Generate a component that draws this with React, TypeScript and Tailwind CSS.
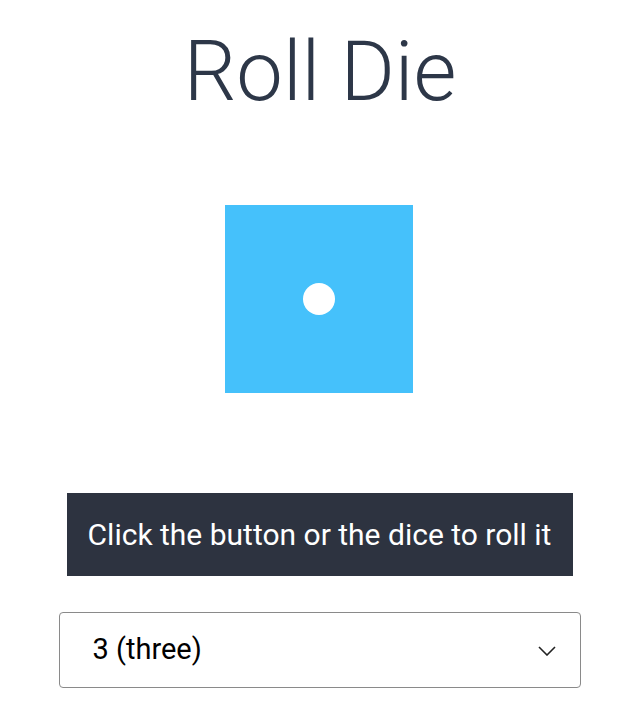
import { useState } from "react";

const NAMES = ["one", "two", "three", "four", "five", "six"];

// pip positions on a 3x3 grid for each face
const PIPS: Record<number, [number, number][]> = {
  1: [[1, 1]],
  2: [[0, 0], [2, 2]],
  3: [[0, 0], [1, 1], [2, 2]],
  4: [[0, 0], [0, 2], [2, 0], [2, 2]],
  5: [[0, 0], [0, 2], [1, 1], [2, 0], [2, 2]],
  6: [[0, 0], [0, 2], [1, 0], [1, 2], [2, 0], [2, 2]],
};

export default function App() {
  const [face, setFace] = useState(1);
  const [choice, setChoice] = useState(3);

  const roll = () => setFace(Math.floor(Math.random() * 6) + 1);

  return (
    <div className="flex flex-col items-center bg-white font-['Roboto',sans-serif] min-h-screen">
      <h1 className="mt-[22px] text-[83px] font-light leading-[100px] text-[#2d3748]">
        Roll Die
      </h1>

      <button
        onClick={roll}
        className="mt-[83px] mr-[2px] grid size-[188px] grid-cols-3 grid-rows-3 bg-[#45c1fb] p-[46px] cursor-pointer"
        aria-label="dice"
      >
        {Array.from({ length: 9 }).map((_, i) => {
          const r = Math.floor(i / 3);
          const c = i % 3;
          const on = PIPS[face].some(([pr, pc]) => pr === r && pc === c);
          return (
            <span key={i} className="flex items-center justify-center">
              {on && <span className="size-[32px] rounded-full bg-white" />}
            </span>
          );
        })}
      </button>

      <button
        onClick={roll}
        className="mt-[100px] mr-[1px] h-[83px] w-[506px] bg-[#2d3340] text-[30px] text-white"
      >
        Click the button or the dice to roll it
      </button>

      <div className="relative mt-[36px] mr-[1px] w-[522px]">
        <select
          value={choice}
          onChange={(e) => setChoice(Number(e.target.value))}
          className="h-[76px] w-full appearance-none rounded-[4px] border border-[#8a8a8a] bg-white pl-[33px] text-[29px] text-black outline-none"
        >
          {NAMES.map((n, i) => (
            <option key={n} value={i + 1}>
              {i + 1} ({n})
            </option>
          ))}
        </select>
        <svg
          className="pointer-events-none absolute right-[25px] top-[34px]"
          width="18"
          height="10"
          viewBox="0 0 18 10"
          fill="none"
          stroke="#222"
          strokeWidth="1.6"
        >
          <path d="M1 1l8 8 8-8" />
        </svg>
      </div>
    </div>
  );
}
